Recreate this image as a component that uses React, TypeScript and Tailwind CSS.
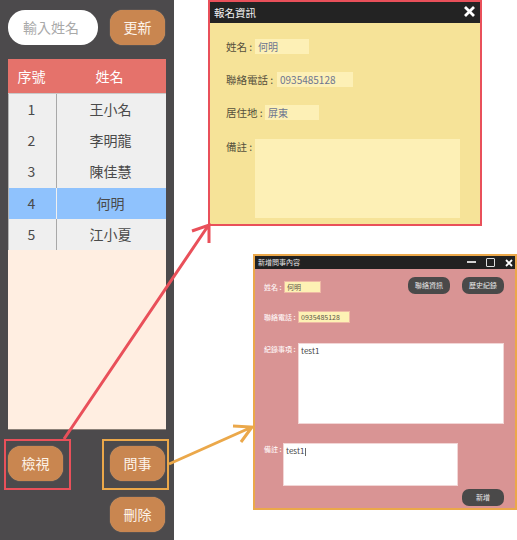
const font = { fontFamily: '"Noto Sans CJK TC", "Noto Sans", sans-serif' };

const rows = [
  ["1", "王小名"],
  ["2", "李明龍"],
  ["3", "陳佳慧"],
  ["4", "何明"],
  ["5", "江小夏"],
];

function Btn({ children }: { children: string }) {
  return (
    <div className="flex h-[35px] w-[55px] items-center justify-center rounded-[13px] bg-[#c98650] text-[14px] text-[#fdf3e9] shadow-[0_0_1px_#e0b080]">
      {children}
    </div>
  );
}

function Sidebar() {
  return (
    <div className="flex h-[540px] w-[174px] flex-col bg-[#4c4a4c] pl-2 pr-2 pt-[10px]">
      <div className="flex items-center justify-between pr-[1px]">
        <div className="flex h-[35px] w-[90px] items-center justify-center rounded-[17px] bg-white pr-[4px] text-[14px] text-[#a9a9a9]">
          輸入姓名
        </div>
        <Btn>更新</Btn>
      </div>
      <div className="mt-[14px] flex h-[370px] w-[158px] flex-col bg-[#ffeee1] shadow-[0_1px_0_#8b8178]">
        <div className="flex h-[34px] shrink-0 items-center bg-[#e5726b] text-[14px] text-white">
          <div className="w-[47px] text-center">序號</div>
          <div className="flex-1 pr-[2px] text-center">姓名</div>
        </div>
        <div className="h-[1px] bg-[#c9c9c9]" />
        {rows.map(([n, name]) => {
          const sel = n === "4";
          return (
            <div
              key={n}
              className={`flex h-[31.2px] shrink-0 items-center text-[14px] text-[#4a4a4a] ${sel ? "bg-[#8fc2fd]" : "bg-[#efefef]"}`}
            >
              <div className="flex h-full w-[48px] items-center justify-center border-l border-[#b4b4b4] pr-[2px]">{n}</div>
              <div className={`flex h-full flex-1 items-center justify-center border-l pr-[2px] ${sel ? "border-[#f0f0f0]" : "border-[#a8a8a8]"}`}>{name}</div>
            </div>
          );
        })}
      </div>
      <div className="mt-[17px] flex justify-between pr-[1px]">
        <Btn>檢視</Btn>
        <Btn>問事</Btn>
      </div>
      <div className="mt-[16px] flex justify-end pr-[1px]">
        <Btn>刪除</Btn>
      </div>
    </div>
  );
}

function InfoWindow() {
  const label = "text-[10.5px] leading-[15px] text-[#55503c] whitespace-nowrap";
  const field = "flex h-[15px] items-center bg-[#fdf0b6] pl-[3px] text-[10px] text-[#6d7590]";
  return (
    <div className="absolute left-[208px] top-0 flex h-[226px] w-[274px] flex-col border-2 border-[#e9505a] bg-[#f6e398]">
      <div className="flex h-[21px] shrink-0 items-center justify-between bg-[#232323] pl-[4px] pr-[4px] text-[10.5px] text-[#f2f2f2]">
        <span>報名資訊</span>
        <svg width="13" height="13" viewBox="0 0 13 13" className="mb-[3px]">
          <path d="M2 2 L11 11 M11 2 L2 11" stroke="#fff" strokeWidth="2.8" />
        </svg>
      </div>
      <div className="flex flex-col pl-[16px] pt-[16px]">
        <div className="flex items-center">
          <span className={`${label} w-[29px]`}>姓名 :</span>
          <div className={`${field} w-[54px]`}>何明</div>
        </div>
        <div className="mt-[18px] flex items-center">
          <span className={`${label} w-[51px]`}>聯絡電話 :</span>
          <div className={`${field} w-[76px]`}>0935485128</div>
        </div>
        <div className="mt-[18px] flex items-center">
          <span className={`${label} w-[39px]`}>居住地 :</span>
          <div className={`${field} w-[54px]`}>屏東</div>
        </div>
        <div className="mt-[19px] flex items-start">
          <span className={`${label} w-[29px]`}>備註 :</span>
          <div className="h-[79px] w-[205px] bg-[#fdf0b6]" />
        </div>
      </div>
    </div>
  );
}

function TalkWindow() {
  const label = "text-[7px] font-medium leading-[12px] text-[#fdf3f3] whitespace-nowrap";
  const field = "flex h-[12px] items-center border border-[#eeb9a5] bg-[#fdf1b4] pl-[2px] text-[7px] text-[#5c5648]";
  const dark = "flex h-[17px] w-[42px] items-center justify-center rounded-[7px] bg-[#4a4949] text-[7px] text-[#e8e8e8]";
  const box = "border border-[#f2d6d6] bg-white pl-[2px] pt-[1px] text-[8px] leading-[12px] text-[#444]";
  return (
    <div className="absolute left-[253px] top-[254px] flex h-[256px] w-[264px] flex-col border-2 border-[#eba84a] bg-[#d99494]">
      <div className="flex h-[13px] shrink-0 items-center justify-between bg-[#212121] pl-[3px] pr-[2px] text-[7px] text-[#e6e6e6]">
        <span>新增問事內容</span>
        <div className="flex items-center gap-[10px]">
          <svg width="9" height="8" viewBox="0 0 9 8" className="mb-[1px]"><path d="M0 4 H9" stroke="#fff" strokeWidth="1.6" /></svg>
          <svg width="9" height="9" viewBox="0 0 9 9"><rect x="0.5" y="0.5" width="8" height="8" rx="0.5" fill="none" stroke="#ddd" strokeWidth="1" /></svg>
          <svg width="8" height="8" viewBox="0 0 8 8"><path d="M1 1 L7 7 M7 1 L1 7" stroke="#fff" strokeWidth="1.8" /></svg>
        </div>
      </div>
      <div className="flex flex-col pl-[9px] pr-[11px] pt-[8px]">
        <div className="flex items-start justify-between">
          <div className="mt-[4px] flex items-center">
            <span className={`${label} w-[20px]`}>姓名 :</span>
            <div className={`${field} w-[37px]`}>何明</div>
          </div>
          <div className="flex gap-[12px]">
            <div className={dark}>聯絡資訊</div>
            <div className={dark}>歷史紀錄</div>
          </div>
        </div>
        <div className="mt-[17px] flex items-center">
          <span className={`${label} w-[34px]`}>聯絡電話 :</span>
          <div className={`${field} w-[52px]`}>0935485128</div>
        </div>
        <div className="mt-[20px] flex items-start">
          <span className={`${label} w-[34px]`}>紀錄事項 :</span>
          <div className={`${box} h-[81px] w-[206px]`}>test1</div>
        </div>
        <div className="mt-[19px] flex items-start">
          <span className={`${label} w-[19px]`}>備註 :</span>
          <div className={`${box} h-[43px] w-[175px]`}>
            test1<span className="ml-[0.5px] inline-block h-[8px] w-[1px] bg-[#666] align-middle" />
          </div>
        </div>
        <div className="mt-[3px] flex justify-end">
          <div className={`${dark} w-[27px]`}>新增</div>
        </div>
      </div>
    </div>
  );
}

export default function App() {
  return (
    <div className="relative h-[540px] w-[517px] overflow-hidden bg-white" style={font}>
      <Sidebar />
      <InfoWindow />
      <TalkWindow />
      <div className="absolute left-[4px] top-[439px] h-[51px] w-[67px] border-2 border-[#e9505a]" />
      <div className="absolute left-[102px] top-[439px] h-[51px] w-[67px] border-2 border-[#eba84a]" />
      <svg className="absolute left-0 top-0" width="517" height="540" viewBox="0 0 517 540" fill="none">
        <path d="M64 439 L208 226 M192 231 L209 225 L209 243" stroke="#e9505a" strokeWidth="3" />
        <path d="M169 464 L252 427 M233 426 L252 427 L241 442" stroke="#eba84a" strokeWidth="3" />
      </svg>
    </div>
  );
}
